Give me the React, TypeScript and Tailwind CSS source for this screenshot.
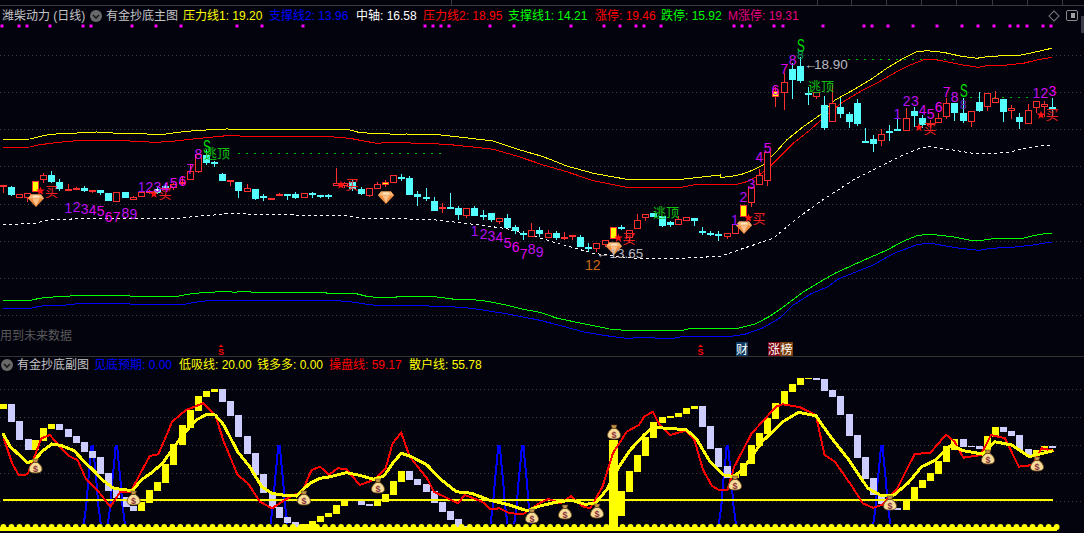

import React from "react";

type P = number[];
type C = [number, string, number, number, number, number];

const Z3 = (x: number, y: number): [number, number] => [x / 3, 130 + y / 3];
const Z4 = (x: number, y: number): [number, number] => [360 + x / 3, 130 + y / 3];
const Z5 = (x: number, y: number): [number, number] => [720 + x / 3, 30 + y / 3];
const Z6 = (x: number, y: number): [number, number] => [x / 2.904, 320 + y / 3];
const Z7 = (x: number, y: number): [number, number] => [540 + x / 2.882, 320 + y / 3];
const Z11 = (x: number, y: number): [number, number] => [x / 2.904, 230 + y / 3];
const Z12 = (x: number, y: number): [number, number] => [540 + x / 2.882, 220 + y / 3];

const pts = (f: (x: number, y: number) => [number, number], a: P) => {
  const out: string[] = [];
  for (let i = 0; i < a.length; i += 2) {
    const [x, y] = f(a[i], a[i + 1]);
    out.push(`${x.toFixed(1)},${y.toFixed(1)}`);
  }
  return out;
};

const candles3: C[] = [
  [10, "r", 166, 166, 172, 190], [34, "c", 168, 172, 195, 197], [58, "r", 192, 192, 203, 203], [82, "r", 190, 190, 203, 215],
  [106, "y", 153, 153, 185, 185], [130, "r", 128, 135, 150, 158], [154, "c", 123, 135, 157, 160], [178, "c", 148, 155, 178, 183],
  [205, "r", 163, 178, 183, 183], [229, "r", 172, 174, 178, 180], [253, "c", 168, 174, 183, 186], [277, "r", 181, 181, 185, 190],
  [301, "c", 181, 181, 189, 194], [325, "c", 190, 190, 213, 213], [349, "r", 187, 187, 215, 215], [376, "c", 186, 186, 204, 204],
  [400, "r", 199, 202, 209, 209], [424, "r", 182, 187, 200, 200], [448, "r", 179, 183, 188, 192], [472, "c", 172, 177, 188, 192],
  [496, "c", 160, 167, 172, 178], [520, "r", 160, 163, 175, 180], [547, "r", 140, 155, 160, 168], [571, "r", 105, 124, 149, 149],
  [595, "r", 72, 72, 125, 130], [619, "c", 60, 75, 98, 105], [643, "c", 92, 97, 102, 110], [667, "c", 128, 132, 152, 152],
  [691, "r", 150, 150, 154, 168], [715, "c", 156, 156, 183, 204], [742, "r", 162, 175, 185, 185], [766, "c", 178, 178, 207, 210],
  [790, "c", 192, 198, 203, 214], [814, "r", 204, 204, 207, 210], [838, "r", 188, 192, 197, 197], [862, "c", 192, 192, 196, 210],
  [886, "c", 186, 192, 204, 208], [913, "r", 190, 190, 203, 203], [937, "c", 185, 188, 192, 203], [961, "c", 195, 195, 198, 205],
  [985, "c", 193, 195, 199, 207], [1009, "r", 114, 160, 167, 167], [1033, "r", 155, 160, 168, 175], [1057, "c", 150, 155, 177, 183],
];
const candles4: C[] = [
  [4, "c", 170, 178, 192, 195], [28, "r", 175, 175, 198, 201], [52, "r", 155, 163, 176, 176], [76, "y", 150, 156, 164, 172],
  [100, "r", 136, 136, 160, 160], [124, "c", 132, 141, 144, 152], [148, "c", 138, 145, 195, 195], [172, "c", 183, 192, 200, 228],
  [198, "c", 174, 202, 205, 212], [222, "c", 200, 213, 244, 244], [248, "r", 218, 231, 236, 248], [271, "c", 190, 231, 236, 236],
  [295, "c", 228, 234, 255, 270], [319, "r", 235, 235, 258, 263], [343, "c", 228, 234, 258, 258], [369, "c", 240, 256, 259, 270],
  [394, "c", 250, 250, 270, 276], [418, "r", 265, 265, 275, 282], [442, "c", 252, 264, 294, 294], [466, "c", 285, 291, 304, 312],
  [490, "c", 303, 310, 316, 330], [514, "r", 280, 301, 320, 320], [538, "c", 292, 300, 313, 320], [566, "r", 300, 310, 323, 323],
  [590, "c", 303, 309, 324, 330], [614, "r", 306, 320, 323, 330], [638, "r", 316, 316, 320, 330], [662, "c", 316, 322, 351, 351],
  [685, "c", 340, 352, 355, 365], [709, "r", 340, 340, 358, 365], [736, "r", 330, 330, 345, 352], [760, "y", 292, 292, 326, 326],
  [784, "c", 285, 291, 296, 300], [808, "r", 300, 300, 325, 340], [832, "r", 252, 270, 296, 296], [856, "r", 253, 253, 265, 272],
  [880, "c", 250, 250, 260, 260], [906, "c", 258, 258, 288, 290], [930, "c", 272, 276, 285, 292], [955, "r", 258, 268, 284, 284],
  [979, "r", 262, 262, 272, 274], [1003, "c", 264, 264, 272, 288], [1027, "c", 290, 303, 306, 315], [1051, "c", 303, 309, 312, 318],
  [1075, "c", 302, 312, 316, 332],
];
const candles5: C[] = [
  [22, "r", 610, 610, 620, 628], [46, "r", 583, 583, 613, 613], [70, "y", 525, 525, 560, 560], [94, "r", 472, 472, 518, 530],
  [118, "r", 418, 436, 464, 464], [142, "r", 367, 367, 452, 468], [166, "y", 170, 183, 200, 230], [194, "r", 130, 156, 188, 240],
  [218, "c", 100, 118, 150, 207], [241, "c", 80, 108, 153, 160], [265, "c", 172, 189, 196, 225], [289, "r", 187, 187, 200, 208],
  [313, "c", 197, 225, 295, 300], [337, "r", 165, 220, 277, 277], [361, "c", 205, 232, 252, 265], [388, "c", 245, 252, 275, 293],
  [412, "c", 208, 219, 282, 288], [436, "c", 295, 333, 336, 340], [460, "c", 316, 327, 341, 365], [484, "r", 297, 313, 334, 347],
  [508, "c", 285, 302, 305, 332], [532, "c", 267, 297, 300, 303], [559, "r", 233, 265, 302, 302], [583, "c", 230, 243, 258, 290],
  [607, "c", 255, 265, 285, 295], [631, "r", 270, 278, 285, 295], [655, "r", 250, 263, 278, 278], [679, "r", 205, 220, 260, 267],
  [703, "c", 219, 219, 248, 272], [730, "c", 205, 249, 273, 278], [754, "r", 244, 244, 275, 290], [778, "c", 187, 216, 242, 245],
  [802, "r", 190, 190, 230, 243], [826, "r", 183, 205, 218, 218], [850, "c", 207, 207, 245, 275], [874, "r", 225, 235, 242, 268],
  [898, "c", 250, 261, 275, 297], [925, "r", 222, 241, 281, 281], [949, "r", 213, 213, 233, 250], [973, "r", 212, 223, 232, 260],
  [997, "c", 205, 232, 237, 258],
];

const CYAN = "#54ffff";
const RED = "#ff2f2f";
const BG = "#03030e";

function Candles({ data, f }: { data: C[]; f: (x: number, y: number) => [number, number] }) {
  return (
    <g shapeRendering="crispEdges">
      {data.map((c, i) => {
        const [x] = f(c[0], 0);
        const px = Math.round(x - 0.5) + 0.5;
        const hi = Math.round(f(0, c[2])[1]);
        const t = Math.round(f(0, c[3])[1]);
        const b = Math.round(f(0, c[4])[1]);
        const lo = Math.round(f(0, c[5])[1]);
        const h = Math.max(b - t, 2);
        const col = c[1] === "c" ? CYAN : RED;
        return (
          <g key={i}>
            <line x1={px} x2={px} y1={hi} y2={Math.max(lo, t + h)} stroke={col} strokeWidth={1} />
            {c[1] === "c" && <rect x={px - 3.5} y={t} width={7} height={h} fill={CYAN} />}
            {c[1] === "r" &&
              (h < 3 ? (
                <rect x={px - 3.5} y={t} width={7} height={2} fill={RED} />
              ) : (
                <rect x={px - 3} y={t + 0.5} width={6} height={h - 1} fill={BG} stroke={RED} strokeWidth={1} />
              ))}
            {c[1] === "y" && <rect x={px - 3} y={t + 0.5} width={6} height={h - 1} fill="#ffff00" stroke={RED} strokeWidth={1} />}
          </g>
        );
      })}
    </g>
  );
}

function Star({ x, y }: { x: number; y: number }) {
  const p: string[] = [];
  for (let i = 0; i < 10; i++) {
    const r = i % 2 ? 1.9 : 4.6;
    const a = -Math.PI / 2 + (i * Math.PI) / 5;
    p.push(`${(x + r * Math.cos(a)).toFixed(1)},${(y + r * Math.sin(a)).toFixed(1)}`);
  }
  return <polygon points={p.join(" ")} fill="#ff1010" />;
}

function Gem({ x, y }: { x: number; y: number }) {
  return (
    <g transform={`translate(${x} ${y})`}>
      <polygon points="-5,-5.5 5,-5.5 8,-1.5 0,7 -8,-1.5" fill="#ee8d3e" />
      <polygon points="-5,-5.5 5,-5.5 8,-1.5 -8,-1.5" fill="#f9b673" />
      <polygon points="-3.5,-1.5 3.5,-1.5 0,6" fill="#f7c18c" />
      <polygon points="-2.5,-4.5 2.5,-4.5 3.5,-2.5 -3.5,-2.5" fill="#ffe6c8" />
    </g>
  );
}

function Bag({ x, y }: { x: number; y: number }) {
  return (
    <g transform={`translate(${x} ${y})`}>
      <path d="M-3 -7 L3 -7 L1.6 -3.5 L-1.6 -3.5 Z" fill="#c2944a" stroke="#5a3c14" strokeWidth={0.6} />
      <path d="M-2 -3.5 C-5 -1.5 -6.5 1 -6.5 3.2 C-6.5 6 -4 7 0 7 C4 7 6.5 6 6.5 3.2 C6.5 1 5 -1.5 2 -3.5 Z" fill="#f6dc98" stroke="#6b4a1a" strokeWidth={0.9} />
      <text x={0} y={5.5} textAnchor="middle" fontSize={9} fontWeight={700} fill="#8a2f3a">$</text>
    </g>
  );
}

function Lbl({ f, a, fs = 14 }: { f: (x: number, y: number) => [number, number]; a: [string, number, number, string?][]; fs?: number }) {
  const cols = ["#a010ff", "#b810f0", "#c010f0", "#d008f0", "#e004f0", "#f000f0", "#e004e8", "#c814f0", "#b810f0"];
  return (
    <>
      {a.map((l, i) => {
        const [x, y] = f(l[1], l[2]);
        return (
          <text key={i} x={x} y={y + fs * 0.36} textAnchor="middle" fontSize={fs} fill={l[3] ?? cols[i % 9]}>
            {l[0]}
          </text>
        );
      })}
    </>
  );
}

function BigS({ x, y }: { x: number; y: number }) {
  return (
    <text transform={`translate(${x} ${y}) scale(0.78 1.2)`} textAnchor="middle" fontSize={15} fill="#00e000">
      S
    </text>
  );
}

const dots: [(x: number, y: number) => [number, number], number[]][] = [
  [(x) => [x / 2.904, 26], [7, 54, 77, 146, 242, 265, 384, 454, 527, 689, 762, 881, 1235, 1258, 1281, 1305, 1424, 1493]],
  [(x) => [540 + x / 2.882, 26], [90, 185, 231, 277, 300, 350, 560, 583, 606, 675, 701, 816, 935, 958, 1004, 1076, 1145, 1217, 1263, 1309, 1355, 1378, 1404, 1450, 1473]],
];

const GREEN_DOTS = (x1: number, x2: number, y: number) => {
  const o: React.ReactNode[] = [];
  for (let x = x1; x <= x2; x += 8.03) {
    o.push(<rect key={x} x={Math.round(x)} y={y} width={2} height={1} fill="#00c000" />);
  }
  return o;
};

function Upper() {
  const yellow = [
    ...pts(Z3, [10, 28, 90, 27, 110, 22, 150, 13, 190, 11, 290, 6, 315, 8, 390, 11, 490, 13, 560, 4, 600, 1, 680, -3, 755, -2, 975, -2, 1050, 0]),
    ...pts(Z4, [0, 8, 110, 13, 140, 12, 235, 14, 290, 20, 400, 33, 470, 57, 550, 80, 620, 108, 700, 130, 800, 148, 965, 148, 1080, 135]),
    ...pts(Z5, [0, 442, 30, 440, 65, 433, 100, 420, 130, 405, 160, 375, 200, 330, 250, 290, 300, 255, 345, 210, 400, 180, 450, 150, 500, 115, 550, 85, 590, 65, 620, 62, 670, 67, 720, 78, 770, 85, 800, 80, 850, 77, 900, 76, 950, 65, 995, 55]),
  ];
  const red = [
    ...pts(Z3, [10, 52, 90, 51, 115, 45, 165, 38, 240, 31, 390, 33, 465, 37, 505, 35, 600, 25, 680, 17, 755, 19, 975, 19, 1050, 25]),
    ...pts(Z4, [0, 31, 50, 40, 90, 37, 215, 41, 260, 43, 330, 50, 400, 58, 470, 78, 550, 105, 620, 125, 700, 152, 800, 172, 965, 172, 1000, 165, 1080, 163]),
    ...pts(Z5, [0, 463, 50, 463, 80, 455, 110, 440, 145, 415, 180, 380, 220, 340, 270, 300, 320, 255, 370, 215, 420, 185, 470, 160, 530, 125, 570, 105, 610, 90, 640, 88, 680, 95, 730, 105, 775, 112, 810, 105, 860, 105, 910, 100, 950, 90, 995, 82]),
  ];
  const white = [
    ...pts(Z3, [10, 283, 100, 281, 125, 275, 150, 270, 260, 265, 400, 266, 530, 265, 600, 258, 670, 253, 680, 250, 760, 253, 1050, 258]),
    ...pts(Z4, [10, 265, 210, 268, 290, 277, 360, 285, 440, 296, 520, 318, 600, 342, 700, 370, 830, 386, 965, 385, 1080, 379]),
    ...pts(Z5, [160, 625, 225, 570, 300, 515, 400, 450, 500, 400, 550, 375, 600, 355, 625, 350, 700, 360, 770, 372, 860, 368, 930, 352, 990, 345]),
  ];
  const green = [
    ...pts(Z11, [10, 211, 90, 211, 115, 205, 140, 202, 190, 199, 235, 196, 375, 196, 380, 199, 515, 199, 545, 193, 565, 190, 610, 187, 655, 184, 680, 187, 710, 184, 735, 187, 945, 187, 950, 190, 1030, 190, 1065, 199, 1090, 202, 1150, 202, 1155, 199, 1250, 199, 1300, 205, 1320, 208, 1365, 208, 1415, 214, 1460, 223, 1520, 238]),
    ...pts(Z12, [0, 277, 50, 295, 130, 312, 200, 327, 245, 331, 410, 331, 435, 325, 570, 325, 620, 312, 660, 290, 700, 262, 760, 215, 800, 190, 850, 160, 930, 122, 1000, 90, 1050, 62, 1090, 46, 1125, 43, 1190, 50, 1240, 61, 1275, 61, 1300, 57, 1390, 55, 1440, 43, 1475, 40]),
  ];
  const blue = [
    ...pts(Z11, [10, 235, 90, 235, 115, 229, 140, 226, 185, 226, 235, 220, 375, 220, 380, 223, 535, 223, 565, 217, 610, 211, 945, 211, 1010, 214, 1065, 223, 1090, 226, 1180, 226, 1275, 229, 1340, 232, 1390, 238, 1480, 253]),
    ...pts(Z12, [0, 301, 60, 317, 130, 337, 210, 350, 250, 355, 310, 352, 340, 355, 385, 355, 415, 349, 550, 349, 590, 343, 640, 325, 690, 295, 730, 255, 780, 222, 830, 200, 860, 177, 960, 135, 1020, 100, 1090, 73, 1125, 70, 1210, 85, 1265, 91, 1300, 85, 1360, 82, 1420, 75, 1475, 66]),
  ];
  return (
    <svg viewBox="0 24 1084 332" className="block w-[1084px] h-[332px]">
      {[55, 92, 129, 166, 204, 241, 278, 315].map((y) => (
        <line key={y} x1={0} x2={1084} y1={y + 0.5} y2={y + 0.5} stroke="#3c3c3c" strokeWidth={1} strokeDasharray="1 3" />
      ))}
      {dots.map(([f, a], k) => a.map((x) => <rect key={`${k}-${x}`} x={Math.round(f(x, 0)[0]) - 1.5} y={24.5} width={3} height={3} fill="#ff00ff" />))}
      {GREEN_DOTS(238, 443, 153)}
      {GREEN_DOTS(848, 955, 59)}
      {GREEN_DOTS(970, 1030, 97)}
      <g shapeRendering="crispEdges" fill="none" strokeWidth={1}>
        <polyline points={yellow.join(" ")} stroke="#ffff00" />
        <polyline points={red.join(" ")} stroke="#ff0000" />
        <polyline points={white.join(" ")} stroke="#ffffff" strokeDasharray="3 3" />
        <polyline points={green.join(" ")} stroke="#00ff00" />
        <polyline points={blue.join(" ")} stroke="#0000ff" />
      </g>
      <Candles data={candles3} f={Z3} />
      <Candles data={candles4} f={Z4} />
      <Candles data={candles5} f={Z5} />
      <rect x={155} y={189} width={3} height={2} fill="#fff" />
      <Gem x={36} y={200} />
      <Gem x={386} y={197} />
      <Gem x={614} y={248} />
      <Gem x={744} y={227} />
      <Star x={40.5} y={191} />
      <Star x={154} y={194} />
      <Star x={618.5} y={238} />
      <Star x={748.5} y={218} />
      <Star x={919} y={127.5} />
      <Star x={1041} y={115} />
      <Star x={341} y={185} />
      <g fill="#f02020" fontSize={13}>
        <text x={45} y={196}>买</text>
        <text x={158.5} y={198}>买</text>
        <text x={622.5} y={243}>买</text>
        <text x={752.5} y={223}>买</text>
        <text x={923.5} y={133}>买</text>
        <text x={1045.5} y={119}>买</text>
        <text x={345.5} y={189}>买</text>
      </g>
      <Lbl f={Z3} a={[["1", 205, 233], ["2", 230, 230], ["3", 254, 236], ["4", 278, 241], ["5", 302, 242], ["6", 326, 260], ["7", 350, 260], ["8", 376, 250], ["9", 400, 252]]} />
      <Lbl f={Z3} a={[["1", 425, 170], ["2", 448, 170], ["3", 472, 172], ["4", 496, 170], ["5", 521, 160], ["6", 547, 152], ["7", 571, 117], ["8", 595, 72]]} />
      <Lbl f={Z4} a={[["1", 344, 302], ["2", 371, 311], ["3", 394, 318], ["4", 418, 320], ["5", 443, 338], ["6", 467, 352], ["7", 491, 371], ["8", 515, 358], ["9", 539, 365]]} />
      <Lbl f={Z5} a={[["1", 45, 570], ["2", 70, 500], ["3", 94, 463], ["4", 118, 380], ["5", 143, 353], ["6", 166, 180], ["7", 193, 118], ["8", 218, 90]]} />
      <Lbl f={Z5} a={[["1", 532, 252], ["2", 560, 212], ["3", 585, 212], ["4", 608, 240], ["5", 632, 252], ["6", 656, 230], ["7", 680, 185], ["8", 704, 201], ["1", 949, 190]]} />
      <Lbl f={Z5} a={[["2", 973, 190, "#cc11ee"], ["3", 997, 183, "#ee00ee"]]} />
      <BigS x={207} y={153} />
      <BigS x={801} y={52} />
      <BigS x={964} y={97} />
      <Lbl f={Z5} fs={12} a={[["8", 241, 75, "#10a060"], ["8", 730, 224, "#7030c0"]]} />
      <g fill="#10c010" fontSize={13}>
        <text x={204} y={158}>逃顶</text>
        <text x={653} y={217}>逃顶</text>
        <text x={808} y={91}>逃顶</text>
      </g>
      <text x={585} y={270} fontSize={14} fill="#cc6a10">12</text>
      <text x={596} y={258} fontSize={13.5} fill="#b8b8c0">←13.65</text>
      <text x={804} y={69} fontSize={13.5} fill="#b8b8c0">←</text>
      <text x={814} y={69} fontSize={13.5} fill="#b8b8c0">18.90</text>
      <text x={0} y={340} fontSize={12} fill="#5a5a5a">用到未来数据</text>
      <g fill="#ff0000">
        <polygon points="221,344.5 223.5,347 218.5,347" />
        <text x={221} y={354.5} textAnchor="middle" fontSize={9} fontWeight={700}>S</text>
        <polygon points="700.5,344.5 703,347 698,347" />
        <text x={700.5} y={354.5} textAnchor="middle" fontSize={9} fontWeight={700}>S</text>
      </g>
      <rect x={736} y={342} width={12} height={14} fill="#0b3a62" />
      <text x={742} y={353.5} textAnchor="middle" fontSize={12} fill="#fff">财</text>
      <rect x={768} y={342} width={12} height={14} fill="#7a0010" />
      <rect x={780} y={342} width={13} height={14} fill="#7a4010" />
      <text x={774} y={353.5} textAnchor="middle" fontSize={12} fill="#fff">涨</text>
      <text x={786.5} y={353.5} textAnchor="middle" fontSize={12} fill="#fff">榜</text>
    </svg>
  );
}

const bars6: [number, number, number, number][] = [
  [10, 252, 266, 1], [34, 252, 305, 0], [58, 303, 359, 0], [82, 357, 390, 0], [103, 360, 390, 1], [126, 324, 363, 1], [150, 312, 327, 1], [173, 312, 330, 0],
  [199, 327, 351, 0], [222, 348, 369, 0], [246, 366, 396, 0], [268, 393, 414, 0], [292, 411, 462, 0], [316, 459, 513, 0], [338, 510, 534, 0], [366, 531, 561, 0],
  [388, 558, 573, 0], [411, 546, 573, 1], [434, 510, 548, 1], [457, 486, 513, 1], [481, 432, 489, 1], [505, 372, 435, 1], [530, 315, 375, 1], [554, 270, 324, 1],
  [577, 228, 273, 1], [600, 213, 231, 1], [624, 207, 215, 1], [646, 207, 245, 0], [669, 243, 288, 0], [693, 285, 351, 0], [718, 348, 402, 0], [742, 399, 465, 0],
  [766, 462, 519, 0], [790, 516, 564, 0], [812, 561, 594, 0], [836, 591, 609, 0], [858, 606, 627, 0], [884, 612, 627, 1], [908, 603, 627, 1], [931, 588, 606, 1],
  [954, 579, 591, 1], [977, 555, 582, 1], [1000, 540, 558, 1], [1050, 537, 555, 0], [1074, 552, 558, 0], [1096, 540, 558, 1], [1120, 522, 546, 1], [1143, 483, 525, 1],
  [1167, 453, 486, 1], [1188, 453, 480, 0], [1212, 477, 495, 0], [1238, 492, 516, 0], [1262, 513, 549, 0], [1285, 546, 576, 0], [1308, 573, 600, 0], [1332, 597, 624, 0],
  [1356, 618, 627, 0], [1380, 624, 627, 0],
];
const bars7: [number, number, number, number][] = [
  [235, 514, 588, 1], [258, 453, 516, 1], [281, 405, 456, 1], [304, 351, 408, 1], [327, 306, 354, 1], [352, 291, 309, 1], [376, 288, 294, 1], [399, 279, 291, 1],
  [422, 264, 282, 1], [445, 258, 266, 1], [468, 258, 321, 0], [491, 318, 387, 0], [514, 384, 441, 0], [540, 438, 474, 0], [563, 462, 474, 1], [586, 429, 468, 1],
  [610, 375, 432, 1], [633, 339, 378, 1], [656, 294, 342, 1], [679, 249, 297, 1], [705, 213, 252, 1], [728, 192, 216, 1], [751, 174, 195, 1], [775, 174, 177, 1],
  [797, 174, 180, 0], [820, 177, 213, 0], [843, 210, 231, 0], [866, 228, 285, 0], [892, 282, 348, 0], [915, 345, 414, 0], [938, 411, 477, 0], [961, 474, 525, 0],
  [985, 522, 552, 0], [1008, 549, 570, 0], [1031, 564, 570, 0], [1056, 540, 570, 1], [1080, 501, 540, 1], [1103, 480, 504, 1], [1126, 459, 483, 1], [1149, 423, 462, 1],
  [1172, 378, 426, 1], [1195, 357, 390, 1], [1220, 357, 381, 0], [1244, 378, 381, 0], [1267, 378, 387, 0], [1290, 348, 390, 1], [1313, 321, 351, 1], [1336, 321, 336, 0],
  [1359, 333, 348, 0], [1382, 345, 390, 0], [1408, 387, 405, 0], [1431, 390, 405, 1], [1454, 378, 393, 1], [1478, 378, 384, 0],
];

function Lower() {
  const thick = [
    ...pts(Z6, [8, 340, 30, 380, 80, 428, 100, 420, 125, 392, 150, 372, 180, 377, 215, 392, 245, 425, 270, 450, 300, 482, 330, 505, 385, 512, 410, 480, 440, 458, 470, 432, 500, 390, 530, 345, 570, 300, 600, 283, 625, 285, 650, 315, 690, 395, 725, 440, 760, 500, 790, 520, 820, 525, 860, 528, 900, 490, 930, 475, 960, 470, 1005, 458, 1040, 465, 1085, 478, 1115, 468, 1140, 430, 1165, 400, 1195, 410, 1240, 435, 1280, 478, 1325, 515, 1370, 520, 1420, 540, 1480, 555, 1530, 572]),
    ...pts(Z7, [0, 558, 40, 548, 90, 540, 130, 553, 160, 550, 195, 505, 225, 445, 260, 390, 300, 345, 325, 320, 370, 326, 420, 328, 450, 355, 490, 425, 530, 465, 560, 470, 590, 440, 640, 365, 700, 305, 745, 277, 795, 287, 830, 340, 890, 420, 945, 505, 980, 525, 1020, 525, 1060, 490, 1100, 440, 1140, 420, 1185, 375, 1220, 392, 1275, 402, 1310, 365, 1360, 375, 1410, 410, 1480, 392]),
  ];
  const red = [
    ...pts(Z6, [10, 352, 35, 430, 55, 466, 80, 463, 100, 410, 120, 355, 145, 345, 170, 375, 200, 408, 225, 420, 250, 478, 290, 520, 320, 560, 350, 515, 380, 515, 410, 455, 435, 408, 460, 403, 500, 305, 540, 270, 590, 250, 625, 285, 650, 365, 690, 465, 720, 490, 755, 545, 790, 565, 850, 525, 875, 520, 905, 450, 930, 440, 955, 465, 980, 445, 1005, 447, 1045, 495, 1085, 480, 1120, 445, 1140, 370, 1165, 338, 1190, 410, 1240, 475, 1260, 515, 1330, 550, 1350, 525, 1400, 545, 1425, 568, 1450, 565, 1480, 580, 1520, 582]),
    ...pts(Z7, [0, 548, 25, 537, 60, 550, 90, 528, 120, 558, 145, 565, 180, 500, 210, 400, 250, 335, 285, 315, 300, 290, 325, 275, 345, 315, 375, 345, 420, 332, 445, 360, 470, 450, 495, 497, 515, 510, 540, 510, 560, 440, 610, 340, 650, 295, 680, 260, 700, 253, 750, 262, 795, 285, 820, 405, 850, 425, 900, 500, 930, 550, 960, 563, 985, 555, 1030, 505, 1080, 402, 1125, 398, 1170, 344, 1195, 365, 1220, 413, 1270, 405, 1300, 345, 1340, 355, 1380, 440, 1420, 435, 1445, 385, 1480, 392]),
  ];
  const spikes = [92.3, 116.4, 279, 499, 522.7, 727.4, 881.8];
  const coins: number[] = [];
  for (let i = 0; i < 132; i++) coins.push(3.4 + i * 8.04);
  const bar = (x: number, t: number, b: number, y: number, k: string) => (
    <rect key={k} x={Math.round(x - 3.5)} y={Math.round(t)} width={7} height={Math.max(Math.round(b - t), 1)} fill={y ? "#ffff00" : "#ccccff"} />
  );
  return (
    <svg viewBox="0 373 1084 160" className="block w-[1084px] h-[160px]">
      {[389, 417, 445, 473, 501].map((y) => (
        <line key={y} x1={0} x2={1084} y1={y + 0.5} y2={y + 0.5} stroke="#3c3c3c" strokeWidth={1} strokeDasharray="1 3" />
      ))}
      <g shapeRendering="crispEdges">
        {spikes.map((c) => (
          <polyline key={c} points={`${c - 8.5},524 ${c - 6},505 ${c - 4},480 ${c - 2},460 ${c - 0.8},446 ${c + 0.8},446 ${c + 2},460 ${c + 4},480 ${c + 6},505 ${c + 8.5},524`} fill="none" stroke="#0000ff" strokeWidth={2} />
        ))}
        {bars6.map((b, i) => bar(Z6(b[0], 0)[0], Z6(0, b[1])[1], Z6(0, b[2])[1], b[3], `a${i}`))}
        {bars7.map((b, i) => bar(Z7(b[0], 0)[0], Z7(0, b[1])[1], Z7(0, b[2])[1], b[3], `b${i}`))}
        <rect x={609} y={440} width={9} height={90} fill="#ffff00" />
        <rect x={3} y={499} width={1050} height={2} fill="#ffff00" />
        <polyline points={red.join(" ")} fill="none" stroke="#ff0000" strokeWidth={2} />
        <polyline points={thick.join(" ")} fill="none" stroke="#ffff00" strokeWidth={3} />
        <rect x={0} y={527} width={1057} height={3.5} fill="#ffff00" />
      </g>
      {coins.map((x) => (
        <circle key={x} cx={x} cy={527} r={2.9} fill="#ffff00" />
      ))}
      {[[35.5, 466], [133.6, 498], [304, 498], [378, 486], [532, 516], [565, 512], [597, 511], [614, 432], [735, 483], [890, 503], [988, 457], [1037, 464]].map(([x, y]) => (
        <Bag key={x} x={x} y={y} />
      ))}
    </svg>
  );
}

function Chevron() {
  return (
    <svg viewBox="0 0 12 12" className="w-[12px] h-[12px] shrink-0">
      <circle cx={6} cy={6} r={6} fill="#6a6a6a" />
      <path d="M3 5 L6 8 L9 5" fill="none" stroke="#1c1c1c" strokeWidth={1.6} />
    </svg>
  );
}

export default function App() {
  return (
    <div className="relative w-[1084px] h-[533px] overflow-hidden bg-[#03030e] text-[12px] leading-none [font-family:'Liberation_Sans','Noto_Sans_CJK_SC',sans-serif]">
      <svg viewBox="0 0 1084 5" className="block w-[1084px] h-[5px]">
        {[451, 817, 851, 886, 921, 956, 992, 1027, 1062].map((x) => (
          <line key={x} x1={x + 0.5} x2={x + 0.5} y1={0} y2={5} stroke="#3a3a3a" />
        ))}
      </svg>
      <div className="h-px bg-[#3a3a3a]" />
      <div className="flex items-center h-[18px] pl-[2px] pt-[1px] whitespace-nowrap">
        <span className="w-[88px] shrink-0 text-[#c4c4c4]">潍柴动力 (日线)</span>
        <Chevron />
        <span className="ml-[4px] w-[77px] shrink-0 text-[#c4c4c4]">有金抄底主图</span>
        <span className="w-[86px] shrink-0 text-[#ffff00]">压力线1: 19.20</span>
        <span className="w-[87px] shrink-0 text-[#0000ff]">支撑线2: 13.96</span>
        <span className="w-[67px] shrink-0 text-[#ffffff]">中轴: 16.58</span>
        <span className="w-[85px] shrink-0 text-[#ff0000]">压力线2: 18.95</span>
        <span className="w-[87px] shrink-0 text-[#00ff00]">支撑线1: 14.21</span>
        <span className="w-[66px] shrink-0 text-[#ff0000]">涨停: 19.46</span>
        <span className="w-[67px] shrink-0 text-[#00ff00]">跌停: 15.92</span>
        <span className="shrink-0 text-[#e6007e]">M涨停: 19.31</span>
        <div className="ml-auto flex items-center gap-[8px] pr-[6px]">
          <span className="block w-[8px] h-[8px] rotate-45 border border-[#7a7a7a]" />
          <span className="flex justify-end w-[12px] h-[11px] p-[2px] rounded-[2px] border border-[#8a8a8a]">
            <span className="block w-[4px] h-full bg-[#a0a0a0]" />
          </span>
        </div>
      </div>
      <Upper />
      <div className="h-px bg-[#333333]" />
      <div className="flex items-center h-[16px] pl-[1px] whitespace-nowrap">
        <Chevron />
        <span className="ml-[4px] w-[77px] shrink-0 text-[#c4c4c4]">有金抄底副图</span>
        <span className="w-[85px] shrink-0 text-[#0000ff]">见底预期: 0.00</span>
        <span className="w-[78px] shrink-0 text-[#ffff00]">低吸线: 20.00</span>
        <span className="w-[72px] shrink-0 text-[#ffff00]">钱多多: 0.00</span>
        <span className="w-[80px] shrink-0 text-[#ff0000]">操盘线: 59.17</span>
        <span className="shrink-0 text-[#ffff00]">散户线: 55.78</span>
      </div>
      <Lower />
      <div className="absolute right-0 top-[16px] w-[3px] h-[17px] bg-[#3a3a48]" />
    </div>
  );
}
